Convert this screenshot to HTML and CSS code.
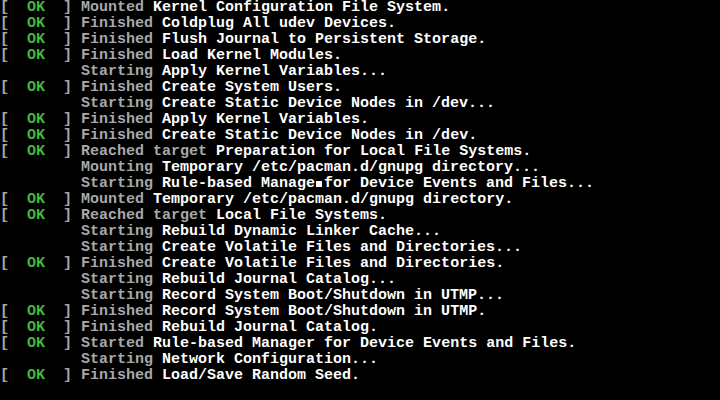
FILE: index.html
```html
<!DOCTYPE html>
<html>
<head>
<meta charset="utf-8">
<link rel="stylesheet" href="styles.css">
</head>
<body>
<div class="console">
<div class="ln"><span class="br">[  <span class="ok">OK</span>  ] </span><span class="vb">Mounted</span> <span class="nm">Kernel Configuration File System.</span></div>
<div class="ln"><span class="br">[  <span class="ok">OK</span>  ] </span><span class="vb">Finished</span> <span class="nm">Coldplug All udev Devices.</span></div>
<div class="ln"><span class="br">[  <span class="ok">OK</span>  ] </span><span class="vb">Finished</span> <span class="nm">Flush Journal to Persistent Storage.</span></div>
<div class="ln"><span class="br">[  <span class="ok">OK</span>  ] </span><span class="vb">Finished</span> <span class="nm">Load Kernel Modules.</span></div>
<div class="ln"><span class="br">         </span><span class="vb">Starting</span> <span class="nm">Apply Kernel Variables...</span></div>
<div class="ln"><span class="br">[  <span class="ok">OK</span>  ] </span><span class="vb">Finished</span> <span class="nm">Create System Users.</span></div>
<div class="ln"><span class="br">         </span><span class="vb">Starting</span> <span class="nm">Create Static Device Nodes in /dev...</span></div>
<div class="ln"><span class="br">[  <span class="ok">OK</span>  ] </span><span class="vb">Finished</span> <span class="nm">Apply Kernel Variables.</span></div>
<div class="ln"><span class="br">[  <span class="ok">OK</span>  ] </span><span class="vb">Finished</span> <span class="nm">Create Static Device Nodes in /dev.</span></div>
<div class="ln"><span class="br">[  <span class="ok">OK</span>  ] </span><span class="vb">Reached target</span> <span class="nm">Preparation for Local File Systems.</span></div>
<div class="ln"><span class="br">         </span><span class="vb">Mounting</span> <span class="nm">Temporary /etc/pacman.d/gnupg directory...</span></div>
<div class="ln"><span class="br">         </span><span class="vb">Starting</span> <span class="nm">Rule-based Manage<span class="blk"></span>for Device Events and Files...</span></div>
<div class="ln"><span class="br">[  <span class="ok">OK</span>  ] </span><span class="vb">Mounted</span> <span class="nm">Temporary /etc/pacman.d/gnupg directory.</span></div>
<div class="ln"><span class="br">[  <span class="ok">OK</span>  ] </span><span class="vb">Reached target</span> <span class="nm">Local File Systems.</span></div>
<div class="ln"><span class="br">         </span><span class="vb">Starting</span> <span class="nm">Rebuild Dynamic Linker Cache...</span></div>
<div class="ln"><span class="br">         </span><span class="vb">Starting</span> <span class="nm">Create Volatile Files and Directories...</span></div>
<div class="ln"><span class="br">[  <span class="ok">OK</span>  ] </span><span class="vb">Finished</span> <span class="nm">Create Volatile Files and Directories.</span></div>
<div class="ln"><span class="br">         </span><span class="vb">Starting</span> <span class="nm">Rebuild Journal Catalog...</span></div>
<div class="ln"><span class="br">         </span><span class="vb">Starting</span> <span class="nm">Record System Boot/Shutdown in UTMP...</span></div>
<div class="ln"><span class="br">[  <span class="ok">OK</span>  ] </span><span class="vb">Finished</span> <span class="nm">Record System Boot/Shutdown in UTMP.</span></div>
<div class="ln"><span class="br">[  <span class="ok">OK</span>  ] </span><span class="vb">Finished</span> <span class="nm">Rebuild Journal Catalog.</span></div>
<div class="ln"><span class="br">[  <span class="ok">OK</span>  ] </span><span class="vb">Started</span> <span class="nm">Rule-based Manager for Device Events and Files.</span></div>
<div class="ln"><span class="br">         </span><span class="vb">Starting</span> <span class="nm">Network Configuration...</span></div>
<div class="ln"><span class="br">[  <span class="ok">OK</span>  ] </span><span class="vb">Finished</span> <span class="nm">Load/Save Random Seed.</span></div>
</div>
</body>
</html>
```
FILE: styles.css
```css
html, body {
  margin: 0;
  padding: 0;
  background: #000;
  width: 720px;
  height: 400px;
  overflow: hidden;
}
.console {
  font-family: "Liberation Mono", "DejaVu Sans Mono", monospace;
  font-size: 15px;
  font-weight: bold;
  line-height: 16px;
  color: #aaaaaa;
}
.ln {
  height: 16px;
  white-space: pre;
}
.br, .vb {
  color: #a8a8a8;
}
.ok {
  color: #3fb83f;
}
.nm {
  color: #ffffff;
}
.blk {
  display: inline-block;
  width: 9px;
  height: 16px;
  vertical-align: top;
  position: relative;
}
.blk::after {
  content: "";
  position: absolute;
  left: 1px;
  top: 5px;
  width: 6px;
  height: 6px;
  background: #ffffff;
}
```
